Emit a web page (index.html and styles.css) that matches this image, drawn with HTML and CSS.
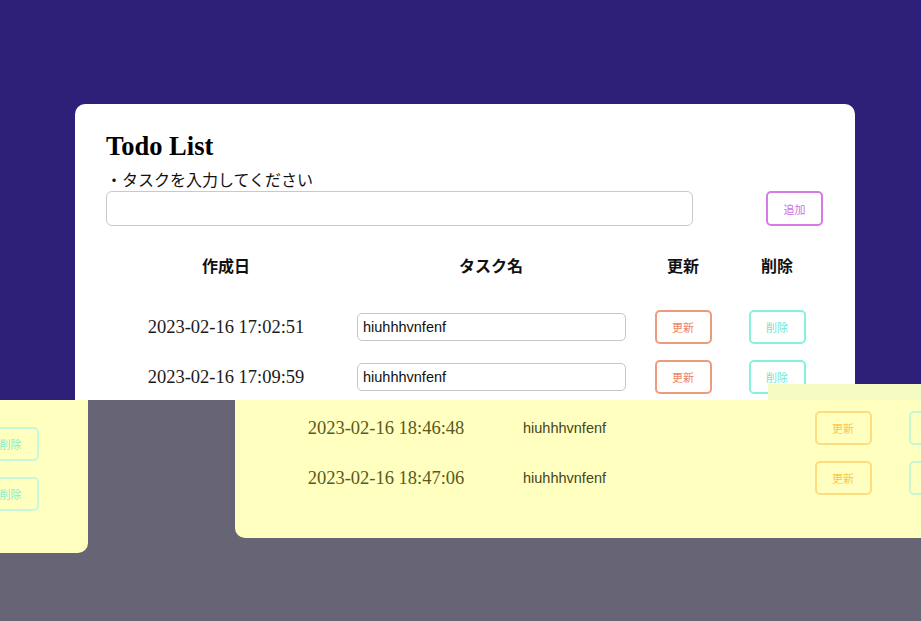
FILE: index.html
```html
<!DOCTYPE html>
<html lang="ja">
<head>
<meta charset="utf-8">
<title>Todo List</title>
<link rel="stylesheet" href="styles.css">
</head>
<body>
<div class="stage">
  <section class="top">
    <div class="card">
      <h1 class="title">Todo List</h1>
      <p class="label">・タスクを入力してください</p>
      <div class="add-row">
        <input class="add-input" type="text" value="">
        <button class="btn btn-add">追加</button>
      </div>
      <div class="grid head">
        <div class="cell">作成日</div>
        <div class="cell">タスク名</div>
        <div class="cell">更新</div>
        <div class="cell">削除</div>
      </div>
      <div class="rows">
        <div class="grid row">
          <div class="cell date">2023-02-16 17:02:51</div>
          <div class="cell task"><input class="task-input" type="text" value="hiuhhhvnfenf"></div>
          <div class="cell"><button class="btn btn-upd">更新</button></div>
          <div class="cell"><button class="btn btn-del">削除</button></div>
        </div>
        <div class="grid row">
          <div class="cell date">2023-02-16 17:09:59</div>
          <div class="cell task"><input class="task-input" type="text" value="hiuhhhvnfenf"></div>
          <div class="cell"><button class="btn btn-upd">更新</button></div>
          <div class="cell"><button class="btn btn-del">削除</button></div>
        </div>
      </div>
    </div>
  </section>
  <section class="bottom">
    <div class="ghost ghost-left">
      <button class="btn ghost-del">削除</button>
      <button class="btn ghost-del">削除</button>
    </div>
    <div class="ghost ghost-main">
      <div class="grid row">
        <div class="cell date ghost-date">2023-02-16 18:46:48</div>
        <div class="cell task"><span class="ghost-task">hiuhhhvnfenf</span></div>
        <div class="cell"><button class="btn ghost-upd">更新</button></div>
        <div class="cell"><button class="btn ghost-del2" aria-label="削除"></button></div>
      </div>
      <div class="grid row">
        <div class="cell date ghost-date">2023-02-16 18:47:06</div>
        <div class="cell task"><span class="ghost-task">hiuhhhvnfenf</span></div>
        <div class="cell"><button class="btn ghost-upd">更新</button></div>
        <div class="cell"><button class="btn ghost-del2" aria-label="削除"></button></div>
      </div>
    </div>
  </section>
  <div class="strip"></div>
</div>
</body>
</html>
```
FILE: styles.css
```css
* { box-sizing: border-box; }
html, body { margin: 0; padding: 0; }
body {
  width: 921px;
  height: 621px;
  overflow: hidden;
  font-family: "Liberation Serif", "Noto Sans CJK JP", serif;
  color: #111;
}
.stage { position: relative; width: 921px; height: 621px; }

.top {
  height: 400px;
  overflow: hidden;
  background: #2e2079;
  padding: 104px 0 0 75px;
}
.card {
  width: 780px;
  height: 434px;
  background: #fff;
  border-radius: 10px;
  padding: 26px 31px 0 31px;
}
.title {
  margin: 0;
  font-size: 26.5px;
  line-height: 32px;
  font-weight: bold;
  font-family: "Liberation Serif", serif;
  color: #000;
}
.label {
  margin: 9px 0 0 0;
  font-size: 16px;
  line-height: 20px;
  color: #111;
}
.add-row { display: flex; align-items: center; }
.add-input {
  width: 587px;
  height: 35px;
  border: 1px solid #c9c9c9;
  border-radius: 6px;
  background: #fff;
  margin: 0;
}
.btn {
  font-family: "Noto Sans CJK JP", "Noto Sans", sans-serif;
  font-size: 11px;
  background: transparent;
  border-radius: 5px;
  padding: 0;
  margin: 0;
  width: 57px;
  height: 34px;
  border: 2px solid #ccc;
}
.btn-add {
  margin-left: 73px;
  height: 35px;
  border-color: #d67ae6;
  color: #cc72df;
}

.grid {
  display: grid;
  grid-template-columns: 240px 290px 94px 94px;
  align-items: center;
}
.cell { display: flex; justify-content: center; align-items: center; }
.head {
  margin-top: 19px;
  height: 40px;
  font-weight: bold;
  font-size: 16px;
  color: #111;
}
.rows { margin-top: 17px; }
.row { height: 50px; }
.date {
  font-size: 18.5px;
  color: #1a1a1a;
  font-family: "Liberation Serif", serif;
}
.task { justify-content: flex-start; padding-left: 11px; }
.task-input {
  width: 269px;
  height: 28px;
  border: 1px solid #c6c6c6;
  border-radius: 5px;
  padding: 0 5px;
  margin: 0;
  font-family: "Liberation Sans", Arial, sans-serif;
  font-size: 14.5px;
  color: #111;
  background: #fff;
}
.btn-upd { border-color: #ee9a7e; color: #ee8466; }
.btn-del { border-color: #8af0de; color: #6fe6cf; }

.bottom {
  height: 221px;
  overflow: hidden;
  background: #676476;
  display: flex;
  align-items: flex-start;
}
.ghost { flex-shrink: 0; background: #ffffc0; border-radius: 0 0 10px 10px; }
.ghost-left {
  width: 200px;
  height: 153px;
  margin-left: -112px;
  padding: 27px 49px 0 0;
  display: flex;
  flex-direction: column;
  align-items: flex-end;
  gap: 16px;
}
.ghost-del {
  width: 57px;
  height: 34px;
  border-color: #c6f9db;
  color: #84eecb;
}
.ghost-main {
  width: 780px;
  height: 138px;
  margin-left: 147px;
  padding: 3px 31px 0 31px;
}
.ghost-date { color: #5b591c; }
.ghost-task {
  padding-left: 6px;
  font-family: "Liberation Sans", Arial, sans-serif;
  font-size: 14.5px;
  color: #47461c;
}
.ghost-upd { border-color: #ffdc80; color: #ffc744; }
.ghost-del2 { border-color: #c4f8d6; color: #a0f0c8; }

.strip {
  position: absolute;
  left: 768px;
  top: 384px;
  width: 153px;
  height: 16px;
  background: #f5fbc3;
}
```
